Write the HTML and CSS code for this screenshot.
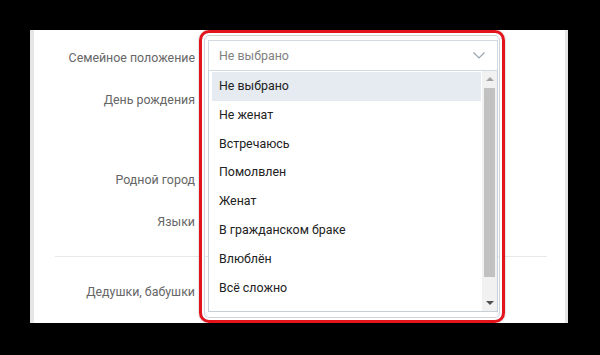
FILE: index.html
```html
<!DOCTYPE html>
<html lang="ru">

<head>
    <meta charset="UTF-8">
    <meta name="viewport" content="width=device-width, initial-scale=1.0">
    <title>Семейное положение</title>
    <link rel="stylesheet" href="styles.css">
</head>

<body>
    <div class="panel">
        <!-- Relationship status with opened list -->
        <div class="row row-status">
            <div class="label">Семейное положение</div>
            <div class="select-wrap">
                <div class="select-head">
                    <span>Не выбрано</span>
                    <svg class="chevron" width="12" height="7" viewBox="0 0 12 7">
                        <path d="M0.5 0.5 L6 6 L11.5 0.5" fill="none" stroke="#9aa4ae" stroke-width="1.2" />
                    </svg>
                </div>
                <div class="dropdown">
                    <ul class="options">
                        <li class="active">Не выбрано</li>
                        <li>Не женат</li>
                        <li>Встречаюсь</li>
                        <li>Помолвлен</li>
                        <li>Женат</li>
                        <li>В гражданском браке</li>
                        <li>Влюблён</li>
                        <li>Всё сложно</li>
                    </ul>
                    <div class="scrollbar">
                        <div class="sb-btn"><span class="arrow-up"></span></div>
                        <div class="sb-thumb"></div>
                        <div class="sb-space"></div>
                        <div class="sb-btn"><span class="arrow-down"></span></div>
                    </div>
                </div>
                <div class="mark"></div>
            </div>
        </div>

        <div class="row row-birth">
            <div class="label">День рождения</div>
        </div>

        <div class="row row-city">
            <div class="label">Родной город</div>
        </div>

        <div class="row row-lang">
            <div class="label">Языки</div>
        </div>

        <div class="separator"></div>

        <div class="row row-family">
            <div class="label">Дедушки, бабушки</div>
        </div>
    </div>
</body>

</html>
```

FILE: styles.css
```css
* {
    margin: 0;
    padding: 0;
    box-sizing: border-box;
    font-family: 'Roboto', 'Liberation Sans', sans-serif;
}

body {
    background-color: #000000;
    font-size: 12.4px;
}

.panel {
    margin: 30px 0 0 30px;
    width: 538px;
    height: 293px;
    background-color: #ffffff;
    border-left: 4px solid #e6e6e6;
    border-right: 3px solid #e6e6e6;
    padding-top: 10px;
}

.row {
    display: grid;
    grid-template-columns: 161px 290px;
    column-gap: 13px;
}

.label {
    text-align: right;
    line-height: 31px;
    height: 31px;
    color: #666666;
    white-space: nowrap;
}

.row-status .label {
    padding-top: 2px;
}

.row-birth {
    margin-top: 13px;
    height: 66px;
}

.row-city {
    margin-top: 14px;
}

.row-lang {
    margin-top: 11px;
}

.separator {
    height: 1px;
    background-color: #e7e8ec;
    margin: 19px 18px 0 21px;
}

.row-family {
    margin-top: 19px;
}

/* select */
.select-wrap {
    position: relative;
    width: 290px;
}

.select-head {
    height: 31px;
    border: 1px solid #d3d9de;
    padding: 0 12px 0 10px;
    display: flex;
    align-items: center;
    justify-content: space-between;
    color: #818181;
    background-color: #ffffff;
}

.chevron {
    display: block;
}

.dropdown {
    position: absolute;
    top: 100%;
    left: 0;
    width: 290px;
    height: 241px;
    border: 1px solid #c5d0db;
    border-top: none;
    background-color: #ffffff;
    display: flex;
}

.options {
    list-style: none;
    flex: 1;
    padding: 1px 0 0 3px;
    margin-right: 1px;
}

.options li {
    height: 28.8px;
    line-height: 28px;
    padding-left: 7px;
    color: #222222;
}

.options li.active {
    background-color: #e5ebf1;
}

.scrollbar {
    width: 15px;
    background-color: #f1f1f1;
    display: flex;
    flex-direction: column;
}

.sb-btn {
    height: 16px;
    display: flex;
    align-items: center;
    justify-content: center;
}

.arrow-up {
    width: 0;
    height: 0;
    border-left: 4px solid transparent;
    border-right: 4px solid transparent;
    border-bottom: 4px solid #a3a3a3;
}

.arrow-down {
    width: 0;
    height: 0;
    border-left: 4px solid transparent;
    border-right: 4px solid transparent;
    border-top: 4px solid #505050;
}

.sb-thumb {
    height: 189px;
    margin: 1px 2px 0;
    background-color: #c1c1c1;
}

.sb-space {
    flex: 1;
}

/* red highlight drawn over the select */
.mark {
    position: absolute;
    left: -9px;
    top: -10px;
    width: 306px;
    height: 293px;
    border: 3px solid #e3151c;
    border-radius: 10px;
    box-shadow: 0 0 2px rgba(0, 0, 0, 0.35), inset 0 0 0 2px #ffffff, inset 0 0 0 3px #cfd4d9;
    pointer-events: none;
}
```
